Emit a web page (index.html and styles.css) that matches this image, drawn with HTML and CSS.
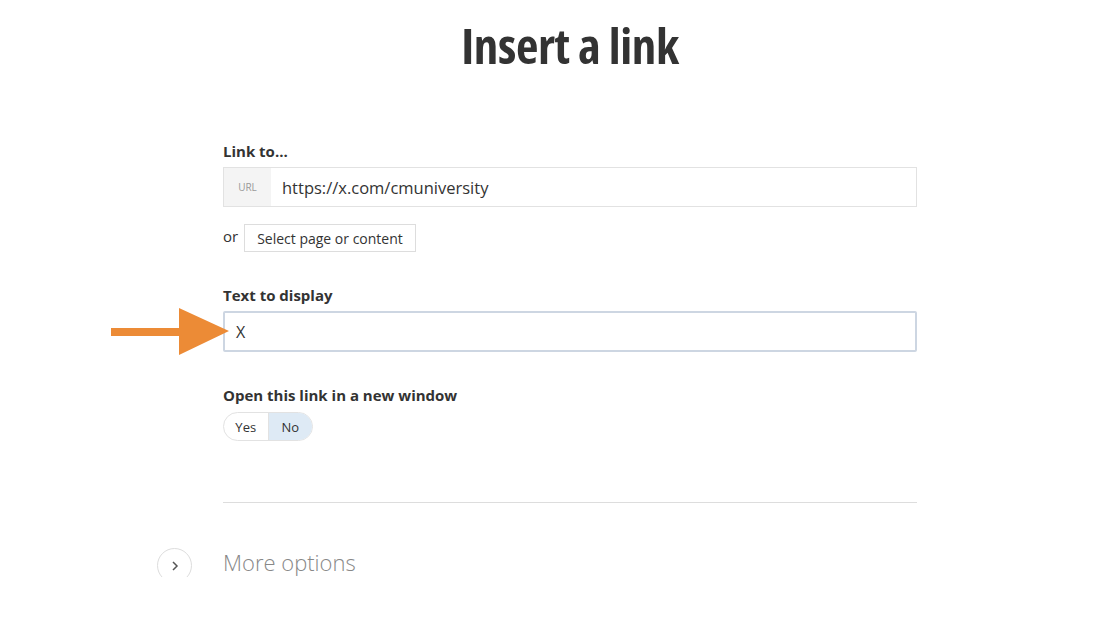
FILE: index.html
```html
<!DOCTYPE html>
<html>
<head>
<meta charset="utf-8">
<link rel="stylesheet" href="styles.css">
</head>
<body>
<div class="page">
  <h1 class="title">Insert a link</h1>
  <form class="form">
    <div class="field">
      <label class="label">Link to...</label>
      <div class="url-input">
        <span class="url-prefix">URL</span>
        <span class="url-value">https://x.com/cmuniversity</span>
      </div>
      <div class="or-row">
        <span class="or">or</span>
        <span class="btn">Select page or content</span>
      </div>
    </div>
    <div class="field field-text">
      <label class="label">Text to display</label>
      <div class="text-wrap">
        <svg class="arrow" width="120" height="50" viewBox="0 0 120 50">
          <polygon points="0,20 68,20 68,0 118,23 68,47 68,28 0,28" fill="#ec8b36"/>
        </svg>
        <div class="text-input">X</div>
      </div>
    </div>
    <div class="field">
      <label class="label">Open this link in a new window</label>
      <div class="toggle">
        <span class="toggle-opt">Yes</span>
        <span class="toggle-opt active">No</span>
      </div>
    </div>
    <hr class="divider">
    <div class="more">
      <span class="more-btn">
        <svg width="10" height="12" viewBox="0 0 10 12"><path d="M3 2 L7 6 L3 10" fill="none" stroke="#555" stroke-width="1.5"/></svg>
      </span>
      <span class="more-text">More options</span>
    </div>
  </form>
</div>
</body>
</html>
```

FILE: styles.css
```css
* { box-sizing: border-box; }
html, body { margin: 0; padding: 0; background: #fff; }
body { font-family: "Open Sans", "Liberation Sans", sans-serif; color: #333; }
.page { padding-left: 20px; display: flex; flex-direction: column; align-items: center; }
.title {
  margin: 13px 0 0;
  font-family: "Open Sans", "DejaVu Sans Condensed", sans-serif;
  font-stretch: 75%;
  font-weight: 700;
  font-size: 49px;
  line-height: 64px;
  color: #333;
  letter-spacing: -0.4px;
}
.form { width: 694px; margin-top: 64px; }
.field { display: flex; flex-direction: column; }
.label { font-size: 15px; font-weight: 700; color: #333; line-height: 20px; margin-bottom: 6px; }
.url-input { display: flex; height: 40px; border: 1px solid #e2e2e2; background: #fff; }
.url-prefix { width: 47px; background: #f4f4f4; font-size: 10px; color: #999; display: flex; align-items: center; justify-content: center; }
.url-value { font-size: 16.5px; color: #333; padding-left: 11px; display: flex; align-items: center; }
.or-row { display: flex; align-items: center; margin-top: 17px; gap: 6px; }
.or { font-size: 15px; color: #333; margin-top: -4px; }
.btn { font-size: 14px; color: #333; border: 1px solid #ddd; height: 28px; padding: 0 12px; display: flex; align-items: center; background: #fff; }
.field-text { margin-top: 33px; }
.text-wrap { position: relative; }
.arrow { position: absolute; left: -112px; top: -3px; }
.text-input { height: 41px; border: 2px solid #cdd6e2; border-radius: 2px; font-size: 16px; padding-left: 11px; display: flex; align-items: center; color: #333; }
.field-text + .field { margin-top: 33px; }
.toggle { display: flex; width: 90px; height: 29px; border: 1px solid #e2e2e2; border-radius: 15px; overflow: hidden; margin-top: 1px; }
.toggle-opt { flex: 1; display: flex; align-items: center; justify-content: center; font-size: 13px; color: #333; }
.toggle-opt:first-child { border-right: 1px solid #e2e2e2; }
.toggle-opt.active { background: #deeaf5; }
.divider { border: 0; border-top: 1px solid #ddd; margin: 61px 0 0; }
.more { position: relative; display: flex; align-items: center; margin-top: 44px; }
.more-btn { position: absolute; left: -66px; top: 50%; margin-top: -14px; width: 35px; height: 35px; border: 1px solid #ddd; border-radius: 50%; display: flex; align-items: center; justify-content: center; }
.more-text { font-size: 22px; font-weight: 300; color: #888; line-height: 30px; }
```
